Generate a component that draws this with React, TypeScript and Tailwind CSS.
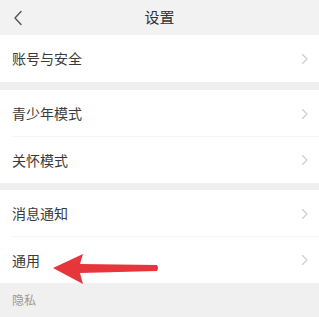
const Chevron = () => (
  <svg width="8" height="12" viewBox="0 0 8 12" fill="none" className="shrink-0">
    <path d="M1.5 1.5 L6 6 L1.5 10.5" stroke="#cccccc" strokeWidth="1.1" strokeLinecap="round" strokeLinejoin="round" />
  </svg>
);

const Row = ({ label, divider, h }: { label: string; divider?: boolean; h: string }) => (
  <div className={`relative flex items-center justify-between bg-white pl-3 pr-[10px] ${h}`}>
    <span className="text-[14px] text-[#3a3a3a]">{label}</span>
    <Chevron />
    {divider && <div className="absolute bottom-0 left-3 right-0 h-px bg-[#f5f5f5]" />}
  </div>
);

const App = () => {
  return (
    <div
      className="relative h-[317px] w-[319px] overflow-hidden bg-[#f0f0f0]"
      style={{ fontFamily: '"Noto Sans CJK SC", "Noto Sans", sans-serif' }}
    >
      <header className="relative flex h-[35px] items-center justify-center bg-[#f2f2f2]">
        <svg width="12" height="16" viewBox="0 0 12 16" fill="none" className="absolute left-[12px] top-[10px]">
          <path d="M9 1.5 L3 8 L9 14.5" stroke="#555" strokeWidth="1.4" strokeLinecap="round" strokeLinejoin="round" />
        </svg>
        <span className="text-[15px] text-[#333]">设置</span>
      </header>

      <Row label="账号与安全" h="h-[47px]" />
      <div className="h-2 bg-[#efefef]" />
      <Row label="青少年模式" h="h-[47px]" divider />
      <Row label="关怀模式" h="h-[46px]" />
      <div className="h-[7px] bg-[#efefef]" />
      <Row label="消息通知" h="h-[47px]" divider />
      <Row label="通用" h="h-[46px]" />

      <div className="flex h-[34px] items-center pl-3 bg-[#f0f0f0]">
        <span className="text-[12px] text-[#9a9a9a]">隐私</span>
      </div>

      <svg
        className="absolute left-[50px] top-[252px]"
        width="112"
        height="34"
        viewBox="0 0 112 34"
      >
        <path
          d="M3 16 L33 2 L30 12 L107 13 Q109 16 107 19 L30 21 L33 32 Z"
          fill="#e6353b"
        />
      </svg>
    </div>
  );
};

export default App;
